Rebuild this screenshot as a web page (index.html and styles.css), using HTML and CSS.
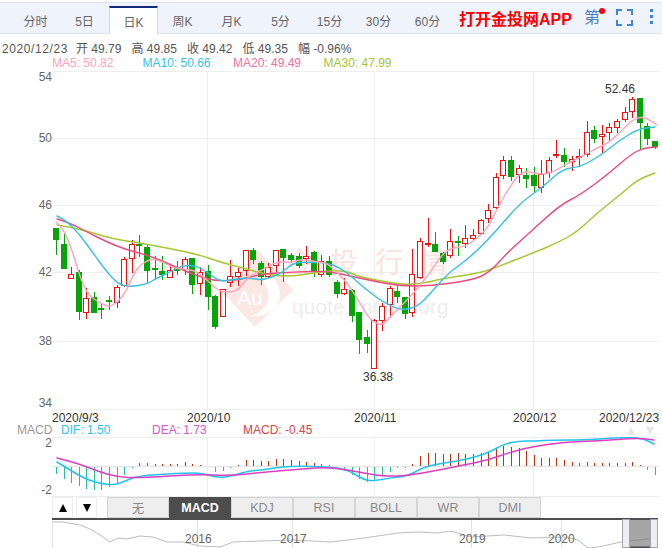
FILE: index.html
```html
<!DOCTYPE html>
<html lang="zh">
<head>
<meta charset="utf-8">
<title>K线图</title>
<link rel="stylesheet" href="styles.css">
</head>
<body>
<div class="page">
  <div class="toolbar">
    <div class="period-tabs">
      <span class="period">分时</span>
      <span class="period">5日</span>
      <span class="period active">日K</span>
      <span class="period">周K</span>
      <span class="period">月K</span>
      <span class="period">5分</span>
      <span class="period">15分</span>
      <span class="period">30分</span>
      <span class="period">60分</span>
    </div>
    <span class="promo">打开金投网APP</span>
    <span class="draw-tool">第<i class="dot"></i></span>
    <svg class="icon-full" width="17" height="17" viewBox="0 0 17 17"><path d="M1 6V1H6M11 1H16V6M16 11V16H11M6 16H1V11" fill="none" stroke="#3f86d0" stroke-width="2"/></svg>
    <span class="kebab"><i></i><i></i><i></i></span>
  </div>

  <div class="quote">
    <span class="q-date">2020/12/23</span>
    <span class="q-item">开 49.79</span>
    <span class="q-item">高 49.85</span>
    <span class="q-item">收 49.42</span>
    <span class="q-item">低 49.35</span>
    <span class="q-item">幅 -0.96%</span>
  </div>

  <div class="ma-legend">
    <span class="ma ma5">MA5: 50.82</span>
    <span class="ma ma10">MA10: 50.66</span>
    <span class="ma ma20">MA20: 49.49</span>
    <span class="ma ma30">MA30: 47.99</span>
  </div>

  <svg id="kline" class="chart" width="662" height="354" viewBox="0 70 662 354"></svg>

  <div class="macd-legend">
    <span class="m-name">MACD</span>
    <span class="m-dif">DIF: 1.50</span>
    <span class="m-dea">DEA: 1.73</span>
    <span class="m-macd">MACD: -0.45</span>
    <span class="arrows"><i class="tri up pale"></i><i class="tri down pale"></i></span>
  </div>

  <svg id="macd" class="chart" width="662" height="60" viewBox="0 437 662 60"></svg>

  <div class="indicator-row">
    <span class="step"><i class="tri up"></i></span>
    <span class="step"><i class="tri down"></i></span>
    <div class="indicators">
      <span class="ind">无</span>
      <span class="ind on">MACD</span>
      <span class="ind">KDJ</span>
      <span class="ind">RSI</span>
      <span class="ind">BOLL</span>
      <span class="ind">WR</span>
      <span class="ind">DMI</span>
    </div>
  </div>

  <svg id="nav" class="chart" width="662" height="30" viewBox="0 518 662 30"></svg>
</div>
<script src="chart.js"></script>
</body>
</html>
```
FILE: styles.css
```css
* { box-sizing: border-box; }
html, body { margin: 0; padding: 0; background: #fff; }
body { width: 662px; height: 548px; overflow: hidden; font-family: "Liberation Sans", "Noto Sans CJK SC", sans-serif; font-size: 12px; color: #555; }
.page { width: 662px; height: 548px; padding-top: 2px; display: flex; flex-direction: column; }

.toolbar { height: 32px; flex: none; display: flex; align-items: center; background: #eef3fc; border-top: 1px solid #dde4f1; border-bottom: 1px solid #dde4f1; }
.period-tabs { display: flex; align-self: stretch; padding: 3px 0 0 11px; width: 459px; flex: none; margin-bottom: -1px; }
.period { width: 49px; display: flex; align-items: center; justify-content: center; color: #666; font-size: 12px; }
.period.active { background: #fff; border-top: 2px solid #14287f; border-left: 1px solid #cfd8e6; border-right: 1px solid #cfd8e6; }
.promo { width: 125px; flex: none; color: #f00; font-weight: 700; font-size: 16px; white-space: nowrap; letter-spacing: 0; }
.draw-tool { position: relative; width: 32px; flex: none; color: #4a7fc8; font-size: 16px; line-height: 18px; }
.dot { position: absolute; left: 15px; top: -1px; width: 6px; height: 6px; border-radius: 50%; background: #f00; }
.icon-full { flex: none; display: block; margin-bottom: 1px; }
.kebab { flex: none; margin-left: 17px; margin-bottom: 4px; width: 4px; display: flex; flex-direction: column; gap: 3px; }
.kebab i { display: block; width: 3px; height: 3px; background: #3f86d0; }

.quote { flex: none; height: 23px; padding: 7px 0 0 2px; line-height: 16px; display: flex; color: #555; white-space: nowrap; }
.q-date { width: 74px; letter-spacing: .6px; }
.q-item { width: 55.5px; }
.ma-legend { flex: none; height: 13px; line-height: 13px; padding-left: 52px; display: flex; }
.ma { width: 90.5px; white-space: nowrap; }
.ma5 { color: #ffa3bb; }
.ma10 { color: #35c3e0; }
.ma20 { color: #f0709a; }
.ma30 { color: #a5c531; }

.chart { display: block; flex: none; }
.chart text { font-family: "Liberation Sans", "Noto Sans CJK SC", sans-serif; font-size: 12px; }
.axis { fill: #666; }
.date { fill: #333; }
.peak { fill: #333; }
.chart .wm-cn { font-size: 28px; fill: #fbe4e0; }
.chart .wm-en { font-size: 21px; fill: #eeeeee; }
.chart .wm-au { font-size: 21px; fill: #fff; }
.year { fill: #666; }

.macd-legend { flex: none; height: 13px; line-height: 13px; display: flex; position: relative; white-space: nowrap; }
.m-name { margin-left: 17px; width: 44px; color: #999; }
.m-dif { width: 91px; color: #2ac4ee; }
.m-dea { width: 91px; color: #dd55cc; }
.m-macd { color: #d84444; }
.arrows { margin-left: auto; width: 29px; margin-right: 6px; display: flex; gap: 11px; align-items: center; }

.tri { display: block; flex: none; width: 0; height: 0; border-left: 4.5px solid transparent; border-right: 4.5px solid transparent; }
.tri.up { border-bottom: 8px solid #000; }
.tri.down { border-top: 8px solid #000; }
.tri.up.pale { border-bottom-color: #e6e6e6; }
.tri.down.pale { border-top-color: #e6e6e6; }

.indicator-row { flex: none; height: 21px; padding-left: 52px; display: flex; gap: 3px; }
.step { width: 21px; height: 21px; border: 1px solid #eee; display: flex; align-items: center; justify-content: center; }
.indicators { display: flex; margin-left: 7px; }
.ind { width: 62px; height: 21px; background: #eee; border: 1px solid #d4d4d4; display: flex; align-items: center; justify-content: center; color: #8a8a8a; font-size: 12.5px; }
.ind.on { background: #4d4d4d; border-color: #4d4d4d; color: #fff; font-weight: 700; }
```
FILE: chart.js
```js
var NS = 'http://www.w3.org/2000/svg';
function add(svg, tag, attrs, text) {
  var el = document.createElementNS(NS, tag);
  for (var k in attrs) el.setAttribute(k, attrs[k]);
  if (text) el.textContent = text;
  svg.appendChild(el);
  return el;
}
function X(i) { return Math.round(56 + 7.582 * i); }
function smooth(p) {
  var d = 'M' + p[0][0] + ' ' + p[0][1];
  for (var i = 1; i < p.length - 1; i++) {
    var mx = (p[i][0] + p[i + 1][0]) / 2, my = (p[i][1] + p[i + 1][1]) / 2;
    d += 'Q' + p[i][0] + ' ' + p[i][1] + ' ' + mx + ' ' + my;
  }
  var l = p[p.length - 1];
  return d + 'L' + l[0] + ' ' + l[1];
}
function line(svg, pts, color, w) {
  add(svg, 'path', { d: smooth(pts), fill: 'none', stroke: color, 'stroke-width': w, 'stroke-linejoin': 'round', 'stroke-linecap': 'round' });
}
var VLINES = [207.5, 374.5, 533.5];

/* ---------- main K chart ---------- */
var k = document.getElementById('kline');
[71, 138, 205, 272, 341, 409].forEach(function (y) {
  add(k, 'rect', { x: 52, y: y, width: 606, height: 1, fill: '#eeeeee' });
});
VLINES.forEach(function (x) {
  add(k, 'rect', { x: x - 0.5, y: 71, width: 1, height: 339, fill: '#eeeeee' });
});
[['54', 81], ['50', 142], ['46', 209], ['42', 276], ['38', 345], ['34', 407]].forEach(function (a) {
  add(k, 'text', { x: 52, y: a[1], 'text-anchor': 'end', 'class': 'axis' }, a[0]);
});
[['2020/9/3', 52], ['2020/10', 187], ['2020/11', 354], ['2020/12', 513], ['2020/12/23', 599]].forEach(function (a) {
  add(k, 'text', { x: a[1], y: 422, 'class': 'date' }, a[0]);
});

/* watermark */
add(k, 'path', { d: 'M258 250L293 290L255 327L222 292Z', fill: '#fbe7e3' });
add(k, 'path', { d: 'M263 282C274 296 268 311 250 316C270 318 284 304 279 288C276 278 270 272 264 268C268 274 268 278 263 282Z', fill: '#ffffff' });
add(k, 'text', { x: 237, y: 305, 'class': 'wm-au' }, 'Au');
add(k, 'text', { x: 285, y: 273, 'class': 'wm-cn' }, '金');
add(k, 'text', { x: 330, y: 273, 'class': 'wm-cn' }, '投');
add(k, 'text', { x: 375, y: 273, 'class': 'wm-cn' }, '行');
add(k, 'text', { x: 420, y: 273, 'class': 'wm-cn' }, '情');
add(k, 'text', { x: 292, y: 314, 'class': 'wm-en' }, 'quote.cngold.org');

/* type, wick top, body top, body bottom, wick bottom */
var C = [
['G',228,228,240,255],['G',233,244,269,269],['R',267,274,279,279],['G',270,272,312,320],['R',288,298,313,319],
['G',292,297,313,313],['G',303,308,310,319],['G',296,300,302,310],['R',285,287,303,308],['R',257,259,286,287],
['R',240,244,259,273],['G',235,244,246,257],['G',244,247,271,283],['G',256,268,270,280],['G',256,271,275,280],
['R',266,270,278,278],['G',261,268,271,275],['R',257,259,270,275],['G',258,258,285,294],['R',267,272,284,295],
['G',265,271,297,310],['G',295,296,327,329],['R',289,289,317,317],['R',260,276,283,287],['R',268,272,277,286],
['R',250,250,271,276],['G',248,250,260,264],['G',261,263,277,285],['R',263,267,277,278],['R',250,250,266,272],
['G',249,249,258,282],['G',253,255,260,263],['G',253,256,266,268],['R',246,256,259,264],['G',251,252,272,277],
['R',255,261,275,277],['G',256,261,275,277],['G',280,282,294,298],['R',278,289,294,295],['G',289,290,316,322],
['G',312,312,340,354],['G',330,337,344,353],['R',319,320,369,369],['R',303,306,321,331],['R',286,288,305,318],
['G',286,291,297,303],['G',297,297,314,319],['R',249,274,313,317],['R',238,241,278,279],['R',218,243,244,247],
['G',232,244,252,252],['G',252,253,262,264],['R',229,241,256,258],['G',236,241,243,256],['R',225,238,244,248],
['R',229,235,239,241],['R',219,220,234,235],['R',204,210,219,223],['R',173,177,208,209],['R',156,160,176,179],
['G',156,160,177,181],['R',165,168,175,183],['G',168,175,179,188],['G',167,175,186,192],['R',160,174,188,193],
['R',157,160,173,178],['R',140,154,156,158],['G',148,155,162,167],['R',156,159,162,171],['R',149,156,158,167],
['R',121,132,155,157],['G',126,130,139,143],['R',125,134,137,153],['R',123,127,133,142],['R',119,121,128,133],
['R',107,112,120,122],['R',97,99,112,118],['G',98,98,123,149],['G',123,126,139,145],['G',141,141,147,149]
];
C.forEach(function (c, i) {
  var x = X(i), col = c[0] === 'G' ? '#05a505' : '#f01010';
  add(k, 'rect', { x: x, y: c[1], width: 1, height: c[4] - c[1], fill: col });
  if (c[0] === 'G') {
    add(k, 'rect', { x: x - 3, y: c[2], width: 6, height: Math.max(c[3] - c[2], 2), fill: col });
  } else {
    add(k, 'rect', { x: x - 2.5, y: c[2] + 0.5, width: 5, height: Math.max(c[3] - c[2] - 1, 1), fill: '#fff', stroke: col, 'stroke-width': 1 });
  }
});

var MA30 = [[57,225],[70,227],[90,232],[113,239],[140,243],[167,248],[200,255],[220,262],[250,270],[273,276],[297,276],[317,272],[343,270],[360,277],[387,282],[407,285],[430,282],[440,279],[480,273],[497,267],[533,253],[557,243],[577,232],[597,213],[620,195],[637,180],[655,173]];
var MA20 = [[57,219],[70,223],[87,232],[107,242],[127,250],[147,255],[167,263],[187,272],[207,279],[220,281],[240,280],[260,274],[293,272],[327,271],[350,276],[373,281],[400,286],[430,286],[473,280],[490,272],[507,253],[527,235],[560,205],[580,195],[607,175],[630,155],[643,148],[657,147]];
var MA10 = [[57,216],[67,221],[80,235],[93,253],[107,272],[118,284],[130,287],[147,284],[157,278],[170,272],[183,265],[197,266],[207,272],[220,282],[233,279],[250,278],[260,280],[270,278],[283,272],[293,263],[307,262],[327,263],[340,268],[350,275],[363,287],[380,300],[393,307],[403,310],[417,307],[430,294],[442,280],[450,272],[473,255],[497,230],[520,203],[543,187],[562,169],[580,167],[600,156],[620,140],[638,129],[655,127]];
var MA5 = [[56,222],[63,228],[72,250],[80,277],[88,295],[100,303],[109,307],[118,302],[127,290],[133,275],[140,265],[147,261],[153,259],[163,262],[173,268],[183,269],[197,271],[210,283],[220,292],[237,292],[247,278],[257,272],[267,268],[275,262],[293,262],[303,259],[317,262],[327,263],[340,275],[350,287],[360,303],[370,320],[382,326],[390,317],[400,307],[410,297],[420,285],[430,273],[440,257],[450,248],[465,247],[477,238],[488,228],[500,203],[510,187],[518,175],[527,171],[542,175],[555,171],[570,162],[583,156],[597,148],[610,142],[627,125],[637,117],[647,118],[657,125]];
line(k, MA30, '#a5c531', 1.4);
line(k, MA20, '#ec4a7c', 1.4);
line(k, MA10, '#35c3e0', 1.4);
line(k, MA5, '#ffa3bb', 1.4);

add(k, 'text', { x: 605, y: 93, 'class': 'peak' }, '52.46');
add(k, 'text', { x: 363, y: 381, 'class': 'peak' }, '36.38');

/* ---------- MACD chart ---------- */
var m = document.getElementById('macd');
[437, 496].forEach(function (y) { add(m, 'rect', { x: 52, y: y, width: 606, height: 1, fill: '#eeeeee' }); });
add(m, 'rect', { x: 52, y: 466, width: 606, height: 1, fill: '#e4e4e4' });
VLINES.forEach(function (x) { add(m, 'rect', { x: x - 0.5, y: 437, width: 1, height: 60, fill: '#eeeeee' }); });
add(m, 'text', { x: 52, y: 447, 'text-anchor': 'end', 'class': 'axis' }, '2');
add(m, 'text', { x: 52, y: 494, 'text-anchor': 'end', 'class': 'axis' }, '-2');
var H = [-7,-12,-16,-19,-22,-23,-23,-20,-17,-8,-1,3,3,2,2,2,2,4,2,1,0,-5,-4,-1,1,6,6,5,5,7,7,6,5,4,3,2,1,-1,-3,-8,-12,-15,-14,-9,-5,-1,-1,2,10,13,13,12,12,13,12,12,13,14,17,20,19,18,15,11,8,8,8,6,4,3,4,3,3,3,3,3,4,1,-3,-8];
H.forEach(function (v, i) {
  if (!v) return;
  var x = X(i);
  add(m, 'rect', { x: x, y: v > 0 ? 466 - v : 467, width: 1, height: Math.abs(v), fill: v > 0 ? '#c4320f' : '#22c197' });
});
var DIF = [[57,462],[70,470],[87,480],[103,484],[115,485],[125,481],[138,476],[167,474],[183,473],[203,473],[217,478],[233,476],[247,471],[263,470],[280,467],[300,466],[331,467],[348,470],[364,480],[374,481],[389,478],[408,476],[418,470],[431,465],[464,460],[488,453],[504,444],[519,441],[534,441],[554,440],[581,440],[631,437],[644,439],[654,444]];
var DEA = [[57,458],[77,463],[97,471],[117,477],[140,478],[200,474],[227,476],[267,472],[300,469],[330,467],[364,473],[381,476],[408,476],[464,465],[488,460],[511,452],[531,447],[564,442],[598,441],[638,438],[654,440]];
line(m, DIF, '#22c4ee', 1.5);
line(m, DEA, '#d93fc0', 1.5);

/* ---------- navigator ---------- */
var n = document.getElementById('nav');
[52.5, 197.5, 292.5, 471.5, 561.5].forEach(function (x) { add(n, 'rect', { x: x - 0.5, y: 520, width: 1, height: 28, fill: '#e2e2e2' }); });
var NAV = [[53,522],[63,522],[80,525],[90,529],[100,535],[110,542],[118,538],[127,539],[140,536],[153,537],[167,542],[183,542],[200,546],[220,547],[233,542],[260,541],[293,540],[331,542],[364,538],[398,533],[418,532],[438,533],[451,531],[471,537],[504,535],[531,538],[564,537],[578,540],[588,548],[598,547],[621,542],[656,538]];
add(n, 'polyline', { points: NAV.map(function (p) { return p.join(','); }).join(' '), fill: 'none', stroke: '#bdbdbd', 'stroke-width': 1 });
[['2016', 185], ['2017', 280], ['2019', 459], ['2020', 548]].forEach(function (a) {
  add(n, 'text', { x: a[1], y: 543, 'class': 'year' }, a[0]);
});
add(n, 'rect', { x: 52, y: 518, width: 606, height: 2, fill: '#4d4d4d' });
add(n, 'rect', { x: 629, y: 520, width: 21, height: 27, fill: '#777', 'fill-opacity': 0.65 });
add(n, 'rect', { x: 629, y: 546.5, width: 21, height: 1.5, fill: '#4d4d4d' });
[622.5, 650.5].forEach(function (x) {
  add(n, 'rect', { x: x, y: 519.5, width: 7, height: 28, fill: '#eeeeee', stroke: '#a3a3b3', 'stroke-width': 1 });
});
```
